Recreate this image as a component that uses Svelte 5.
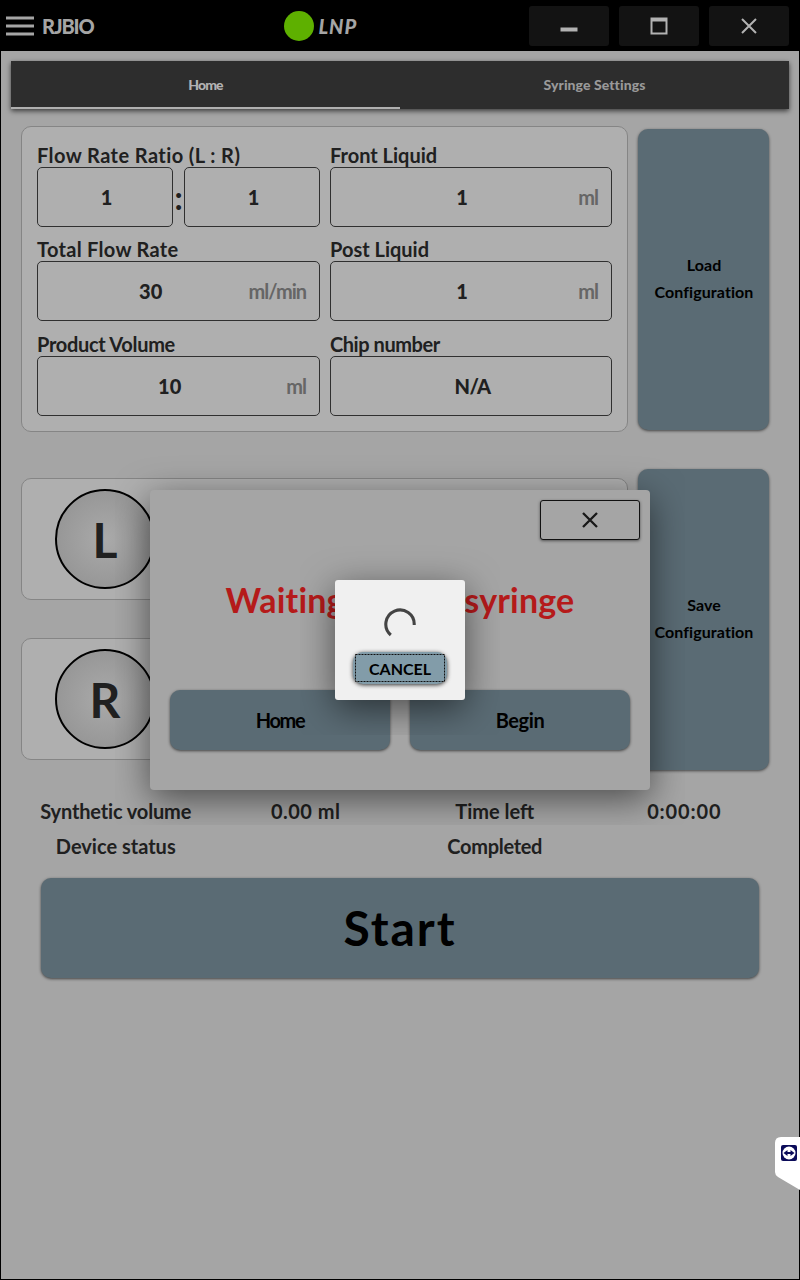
<script>
  const fields = [
    { id: 'total', label: 'Total Flow Rate', value: '30', unit: 'ml/min' },
    { id: 'post', label: 'Post Liquid', value: '1', unit: 'ml' },
    { id: 'product', label: 'Product Volume', value: '10', unit: 'ml' },
    { id: 'chip', label: 'Chip number', value: 'N/A', unit: '' }
  ];
</script>

<div class="window">
  <header>
    <svg class="burger" width="28" height="20" viewBox="0 0 28 20"><path d="M0 2h28M0 10h28M0 18h28" stroke="#a5a5a5" stroke-width="3" /></svg>
    <span class="brand">RJBIO</span>
    <span class="led"></span>
    <span class="mode">LNP</span>
    <div class="controls">
      <button aria-label="Minimize"><svg width="24" height="24" viewBox="0 0 24 24"><path d="M3.5 15.5h17" stroke="#b2b2b2" stroke-width="4" /></svg></button>
      <button aria-label="Maximize"><svg width="24" height="24" viewBox="0 0 24 24"><path d="M3.5 3.5h17v17h-17zM5.5 7.5v11h13v-11z" fill="#b2b2b2" fill-rule="evenodd" /></svg></button>
      <button aria-label="Close"><svg width="24" height="24" viewBox="0 0 24 24"><path d="M5 5l14 14M19 5L5 19" stroke="#b2b2b2" stroke-width="2" /></svg></button>
    </div>
  </header>

  <main>
    <nav>
      <div class="tab active">Home</div>
      <div class="tab other">Syringe Settings</div>
    </nav>

    <section class="config">
      <div class="card form">
        <div class="field ratio">
          <span class="label">Flow Rate Ratio (L : R)</span>
          <div class="pair">
            <div class="input"><b>1</b></div>
            <span class="colon">:</span>
            <div class="input"><b>1</b></div>
          </div>
        </div>
        <div class="field front">
          <span class="label">Front Liquid</span>
          <div class="input"><b>1</b><i>ml</i></div>
        </div>
        {#each fields as f}
          <div class="field {f.id}">
            <span class="label">{f.label}</span>
            <div class="input"><b>{f.value}</b>{#if f.unit}<i>{f.unit}</i>{/if}</div>
          </div>
        {/each}
      </div>
      <button class="action side">Load<br />Configuration</button>
    </section>

    <section class="syringes">
      <div class="slots">
        <div class="card slot"><div class="knob">L</div></div>
        <div class="card slot"><div class="knob">R</div></div>
      </div>
      <button class="action side">Save<br />Configuration</button>
    </section>

    <section class="status">
      <span class="sv">Synthetic volume</span><span class="ml">0.00 ml</span><span class="tl">Time left</span><span class="clock">0:00:00</span>
      <span class="ds">Device status</span><span></span><span class="done">Completed</span><span></span>
    </section>
    <button class="action start">Start</button>
  </main>

  <div class="dialog">
    <div class="top">
      <button class="close" aria-label="Close dialog"><svg width="24" height="24" viewBox="0 0 24 24"><path d="M5 5l14 14M19 5L5 19" stroke="#181818" stroke-width="2.3" /></svg></button>
    </div>
    <p>Waiting for the syringe</p>
    <div class="choices">
      <button class="action home">Home</button>
      <button class="action begin">Begin</button>
    </div>
  </div>

  <div class="loader">
    <svg width="32" height="32" viewBox="0 0 32 32"><path d="M6.8 27A14.2 14.2 0 1 1 30.2 17" fill="none" stroke="#444" stroke-width="3.1" /></svg>
    <button class="action cancel"><svg class="focus" width="90" height="28"><rect x=".5" y=".5" width="89" height="27" fill="none" stroke="#101010" stroke-dasharray="2 1" /></svg><span>CANCEL</span></button>
  </div>

  <div class="remote">
    <svg width="25" height="53" viewBox="0 0 25 53">
      <path d="M25 0H6Q0 0 0 6V35Q0 38 3 40L25 53Z" fill="#fff" />
      <rect x="6" y="8" width="16" height="16" rx="2" fill="#0b0b59" />
      <circle cx="14" cy="16" r="6.5" fill="#fff" />
      <path d="M8.5 16l4-3v2h3v-2l4 3-4 3v-2h-3v2z" fill="#0b0b59" />
    </svg>
  </div>
</div>

<style>
  :global(body) { margin: 0; background: #a5a5a5; }
  * { box-sizing: border-box; }
  .window { position: relative; width: 800px; height: 1280px; overflow: hidden; background: #a5a5a5; box-shadow: inset 1px 0 #000, inset -1px -1px #000; font: 700 20px/24px Lato, sans-serif; color: #202020; }
  button { font: inherit; color: #000; padding: 0; border: 0; display: flex; align-items: center; justify-content: center; }
  header { height: 51px; background: #000; display: flex; align-items: center; padding: 0 11px 0 5.5px; color: #a5a5a5; }
  .burger { margin-right: 8.5px; }
  .brand { width: 241.5px; font-weight: 900; letter-spacing: -1.1px; }
  .led { width: 30px; height: 30px; border-radius: 50%; background: #5eb000; }
  .mode { margin-left: 5px; font-style: italic; font-weight: 900; letter-spacing: .9px; }
  .controls { margin-left: auto; display: flex; gap: 10px; }
  .controls button { width: 80px; height: 40px; border-radius: 3px; background: #131313; }
  main { padding: 10px 11px 0; }
  nav { display: flex; height: 48px; background: #2d2d2d; box-shadow: 0 2px 5px rgba(0,0,0,.65); font-size: 14px; font-weight: 900; color: #999; }
  .tab { flex: 1; display: flex; align-items: center; justify-content: center; padding-top: 2px; border-bottom: 2px solid transparent; }
  .active { color: #b2b2b2; border-bottom-color: #afafaf; letter-spacing: -.9px; }
  .other { letter-spacing: .07px; }
  .card { background: #afafaf; border: 1px solid #858585; border-radius: 10px; }
  .config { margin: 17px 0 0 10px; display: flex; gap: 10px; }
  .form { width: 607px; height: 306px; padding: 16px 15px 0; display: grid; grid-template-columns: 283px 282px; grid-template-rows: 94px 95px 94px; column-gap: 10px; }
  .label { display: block; height: 24px; line-height: 25px; white-space: nowrap; }
  .ratio .label { letter-spacing: .42px; }
  .total .label { letter-spacing: .3px; }
  .product .label { letter-spacing: -.3px; }
  .chip .label { letter-spacing: -.45px; }
  .input { height: 60px; flex: 1; border: 1px solid #303030; border-radius: 5px; display: flex; align-items: center; padding: 0 12px 1px; }
  .input b { flex: 1; text-align: center; padding-left: 3px; }
  .chip b { letter-spacing: -.6px; }
  .input i { font-style: normal; color: #666; letter-spacing: -1px; margin-right: 1px; }
  .pair { display: flex; }
  .colon { width: 11px; font-size: 32px; line-height: 62px; text-align: center; }
  .action { background: #5a6b74; border-radius: 10px; box-shadow: 0 1px 3px rgba(0,0,0,.6); }
  .side { width: 131px; height: 300.5px; font-size: 16px; line-height: 27px; padding: 0 0 3px 1px; letter-spacing: .08px; }
  .config .side { margin-top: 3px; }
  .syringes { margin: 37px 0 0 10px; display: flex; gap: 10px; }
  .slots { width: 607px; padding-top: 9px; display: flex; flex-direction: column; gap: 38px; }
  .slot { height: 122px; padding: 10px 33px; }
  .knob { width: 100px; height: 100px; border: 2px solid #000; border-radius: 50%; background: radial-gradient(circle closest-side, #aaa, #979797); text-align: center; font-size: 48px; line-height: 97px; }
  .status { margin: 24.5px 0 0 10px; display: grid; grid-template-columns: repeat(4, 189.5px); grid-auto-rows: 35px; text-align: center; line-height: 35px; }
  .sv { letter-spacing: -.15px; }
  .ml { letter-spacing: .5px; padding-left: 1px; }
  .clock { letter-spacing: .85px; }
  .done { letter-spacing: -.3px; }
  .start { width: 718px; height: 100px; margin: 13.5px 0 0 30px; font-size: 48px; letter-spacing: 2px; }
  .dialog { position: absolute; left: 150px; top: 490px; width: 500px; height: 300px; border-radius: 4px; background: #a5a5a5; box-shadow: 0 9px 36px rgba(0,0,0,.54); clip-path: inset(-35px); padding: 10px 10px 0 20px; }
  .top { display: flex; justify-content: flex-end; }
  .close { width: 100px; height: 40px; border: 1px solid #111; border-radius: 3px; background: #a5a5a5; box-shadow: 0 1px 3px rgba(0,0,0,.5); }
  .dialog p { margin: 40px 10px 0 0; text-align: center; white-space: nowrap; font-size: 34px; line-height: 40px; letter-spacing: .18px; color: #b51a1a; }
  .choices { margin-top: 70px; display: flex; gap: 20px; }
  .choices button { width: 220px; height: 60px; }
  .home { letter-spacing: -1.4px; }
  .begin { letter-spacing: -.4px; }
  .loader { position: absolute; left: 335px; top: 580px; width: 130px; height: 120px; border-radius: 3px; background: #f0f0f0; box-shadow: 0 9px 36px rgba(0,0,0,.54); clip-path: inset(-35px); padding: 28px 17px 0; display: flex; flex-direction: column; align-items: center; gap: 12px; }
  .cancel { display: grid; width: 94px; height: 32px; margin-right: 1px; background: #829ca9; font-size: 16px; letter-spacing: 0; box-shadow: 0 1px 4px rgba(0,0,0,.8); }
  .cancel > * { grid-area: 1 / 1; place-self: center; }
  .cancel span { padding: 2px 0 0 1px; }
  .remote { position: absolute; left: 775px; top: 1137px; width: 25px; height: 53px; }
  .remote svg { display: block; }
</style>
